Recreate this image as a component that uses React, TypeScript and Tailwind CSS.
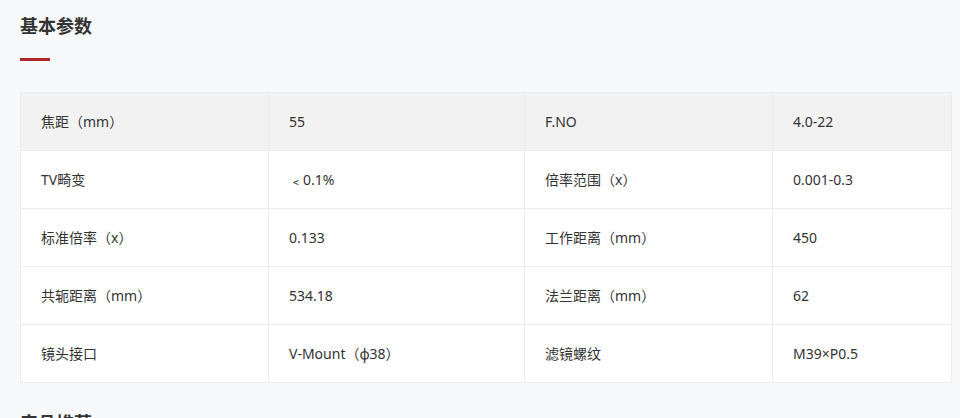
const rows: [string, string, string, string][] = [
  ["焦距（mm）", "55", "F.NO", "4.0-22"],
  ["TV畸变", "﹤0.1%", "倍率范围（x）", "0.001-0.3"],
  ["标准倍率（x）", "0.133", "工作距离（mm）", "450"],
  ["共轭距离（mm）", "534.18", "法兰距离（mm）", "62"],
  ["镜头接口", "V-Mount（φ38）", "滤镜螺纹", "M39×P0.5"],
];

export default function App() {
  return (
    <div
      className="min-h-[418px] w-full overflow-hidden bg-[#f7f8fa] px-5 pt-[12px] text-[#333]"
      style={{ fontFamily: '"Noto Sans", "Noto Sans CJK SC", sans-serif' }}
    >
      <h2 className="text-[18px] font-bold leading-[28px] text-[#333]">基本参数</h2>
      <div className="mt-[18px] h-[3px] w-[30px] bg-[#b0272a]" />

      {/* parameter table */}
      <div className="mt-[31px] w-[932px] border border-[#ececec] bg-white">
        {rows.map((r, i) => (
          <div
            key={i}
            className={[
              "grid grid-cols-[247px_256px_248px_1fr] text-[14px]",
              i > 0 ? "h-[58px] border-t border-[#ececec] bg-white" : "h-[57px] bg-[#f2f2f2]",
            ].join(" ")}
          >
            {r.map((c, j) => (
              <div
                key={j}
                className={[
                  "flex items-center",
                  j > 0 ? "border-l border-[#ececec] pl-[20px]" : "pl-[20px]",
                ].join(" ")}
              >
                {c}
              </div>
            ))}
          </div>
        ))}
      </div>

      <h2 className="mt-[26px] text-[18px] font-bold leading-[28px] text-[#333]">产品推荐</h2>
    </div>
  );
}
